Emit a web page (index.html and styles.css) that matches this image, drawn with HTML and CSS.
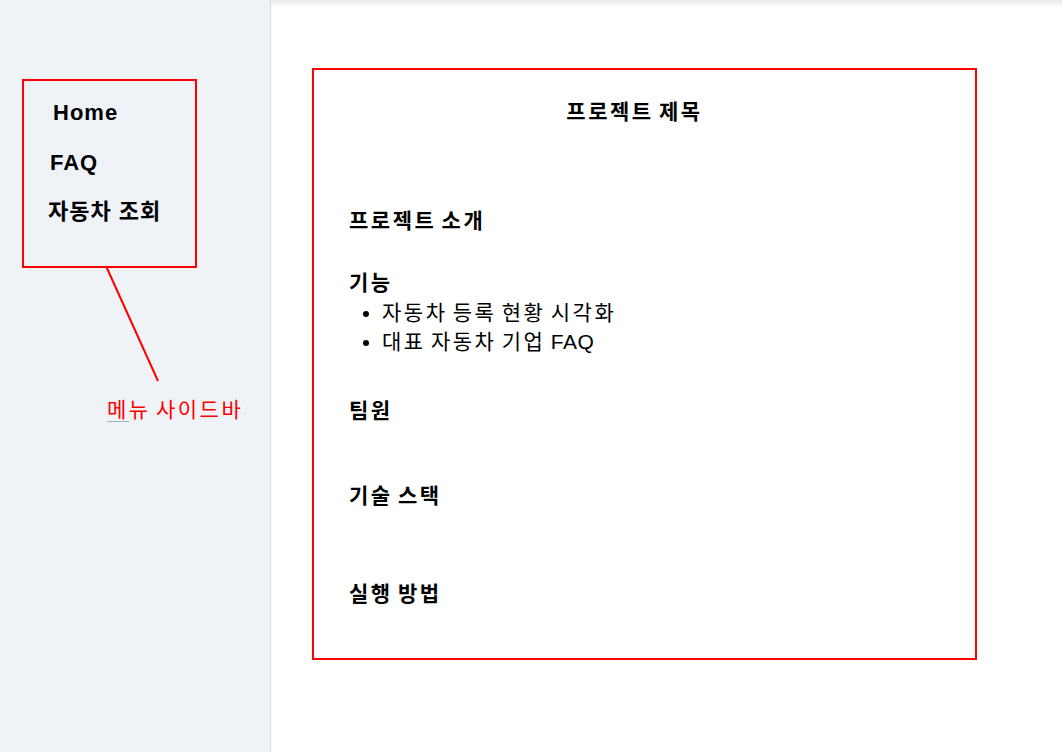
FILE: index.html
```html
<!DOCTYPE html>
<html lang="ko">

<head>
    <meta charset="UTF-8">
    <meta name="viewport" content="width=device-width,initial-scale=1.0">
    <title>프로젝트 제목</title>
    <link rel="stylesheet" href="styles.css">
</head>

<body>
    <div class="app">
        <aside class="sidebar">
            <nav class="menu">
                <a class="menu-item item-home" href="#">Home</a>
                <a class="menu-item item-faq" href="#">FAQ</a>
                <a class="menu-item item-search" href="#">자동차 조회</a>
            </nav>
            <svg class="pointer" width="60" height="120" viewBox="0 0 60 120">
                <line x1="2" y1="1" x2="54" y2="116" stroke="#ff0000" stroke-width="2" />
            </svg>
            <span class="note"><span class="note-mark">메</span>뉴 사이드바</span>
        </aside>

        <main class="content">
            <div class="readme">
                <h2 class="project-title">프로젝트 제목</h2>

                <h3 class="section intro">프로젝트 소개</h3>

                <h3 class="section features">기능</h3>
                <ul class="feature-list">
                    <li>자동차 등록 현황 시각화</li>
                    <li>대표 자동차 기업 <span class="latin">FAQ</span></li>
                </ul>

                <h3 class="section team">팀원</h3>

                <h3 class="section stack">기술 스택</h3>

                <h3 class="section howto">실행 방법</h3>
            </div>
        </main>
    </div>
</body>

</html>
```

FILE: styles.css
```css
* {
    margin: 0;
    padding: 0;
    box-sizing: border-box;
}

body {
    font-family: "Liberation Sans", "Noto Sans CJK KR", sans-serif;
    color: #000;
    background-color: #fff;
}

.app {
    display: flex;
    min-height: 752px;
    position: relative;
}

.app::before {
    content: "";
    position: absolute;
    left: 0;
    right: 0;
    top: 0;
    height: 8px;
    background: linear-gradient(rgba(0, 0, 0, 0.09), rgba(0, 0, 0, 0));
    pointer-events: none;
}

/* sidebar */
.sidebar {
    position: relative;
    width: 271px;
    flex-shrink: 0;
    background-color: #eff2f7;
    border-right: 1px solid #d9dce1;
    padding: 79px 0 0 22px;
}

.menu {
    width: 175px;
    height: 189px;
    border: 2px solid #ff0000;
    display: flex;
    flex-direction: column;
    gap: 19.5px;
    padding: 17px 0 0 26px;
}

.menu-item {
    font-size: 22px;
    font-weight: 700;
    line-height: 30px;
    letter-spacing: 1px;
    color: #000;
    text-decoration: none;
}

.item-home {
    margin-left: 3px;
}

.item-search {
    margin-left: -2px;
}

.pointer {
    position: absolute;
    left: 104px;
    top: 265px;
}

.note {
    position: absolute;
    left: 107px;
    top: 395px;
    font-size: 21px;
    line-height: 30px;
    letter-spacing: 2.5px;
    word-spacing: -3px;
    color: #ff0000;
}

.note-mark {
    border-bottom: 1px solid #9fb1c6;
}

/* main */
.content {
    flex: 1;
    padding: 68px 0 0 41px;
}

.readme {
    width: 665px;
    height: 592px;
    border: 2px solid #ff0000;
    padding: 27px 35px 0 35px;
}

.project-title {
    text-align: center;
    margin-right: 20px;
    font-size: 21px;
    font-weight: 700;
    line-height: 30px;
    letter-spacing: 2.5px;
    word-spacing: -3px;
}

.section {
    font-size: 21px;
    font-weight: 700;
    line-height: 30px;
    letter-spacing: 2.5px;
    word-spacing: -3px;
}

.intro {
    margin-top: 79px;
}

.features {
    margin-top: 32px;
}

.team {
    margin-top: 40px;
}

.stack {
    margin-top: 55px;
}

.howto {
    margin-top: 68px;
}

.feature-list {
    padding-left: 33px;
    font-size: 21px;
    line-height: 29px;
    letter-spacing: 2.5px;
    word-spacing: -3px;
}

.latin {
    letter-spacing: 0.5px;
}
```
